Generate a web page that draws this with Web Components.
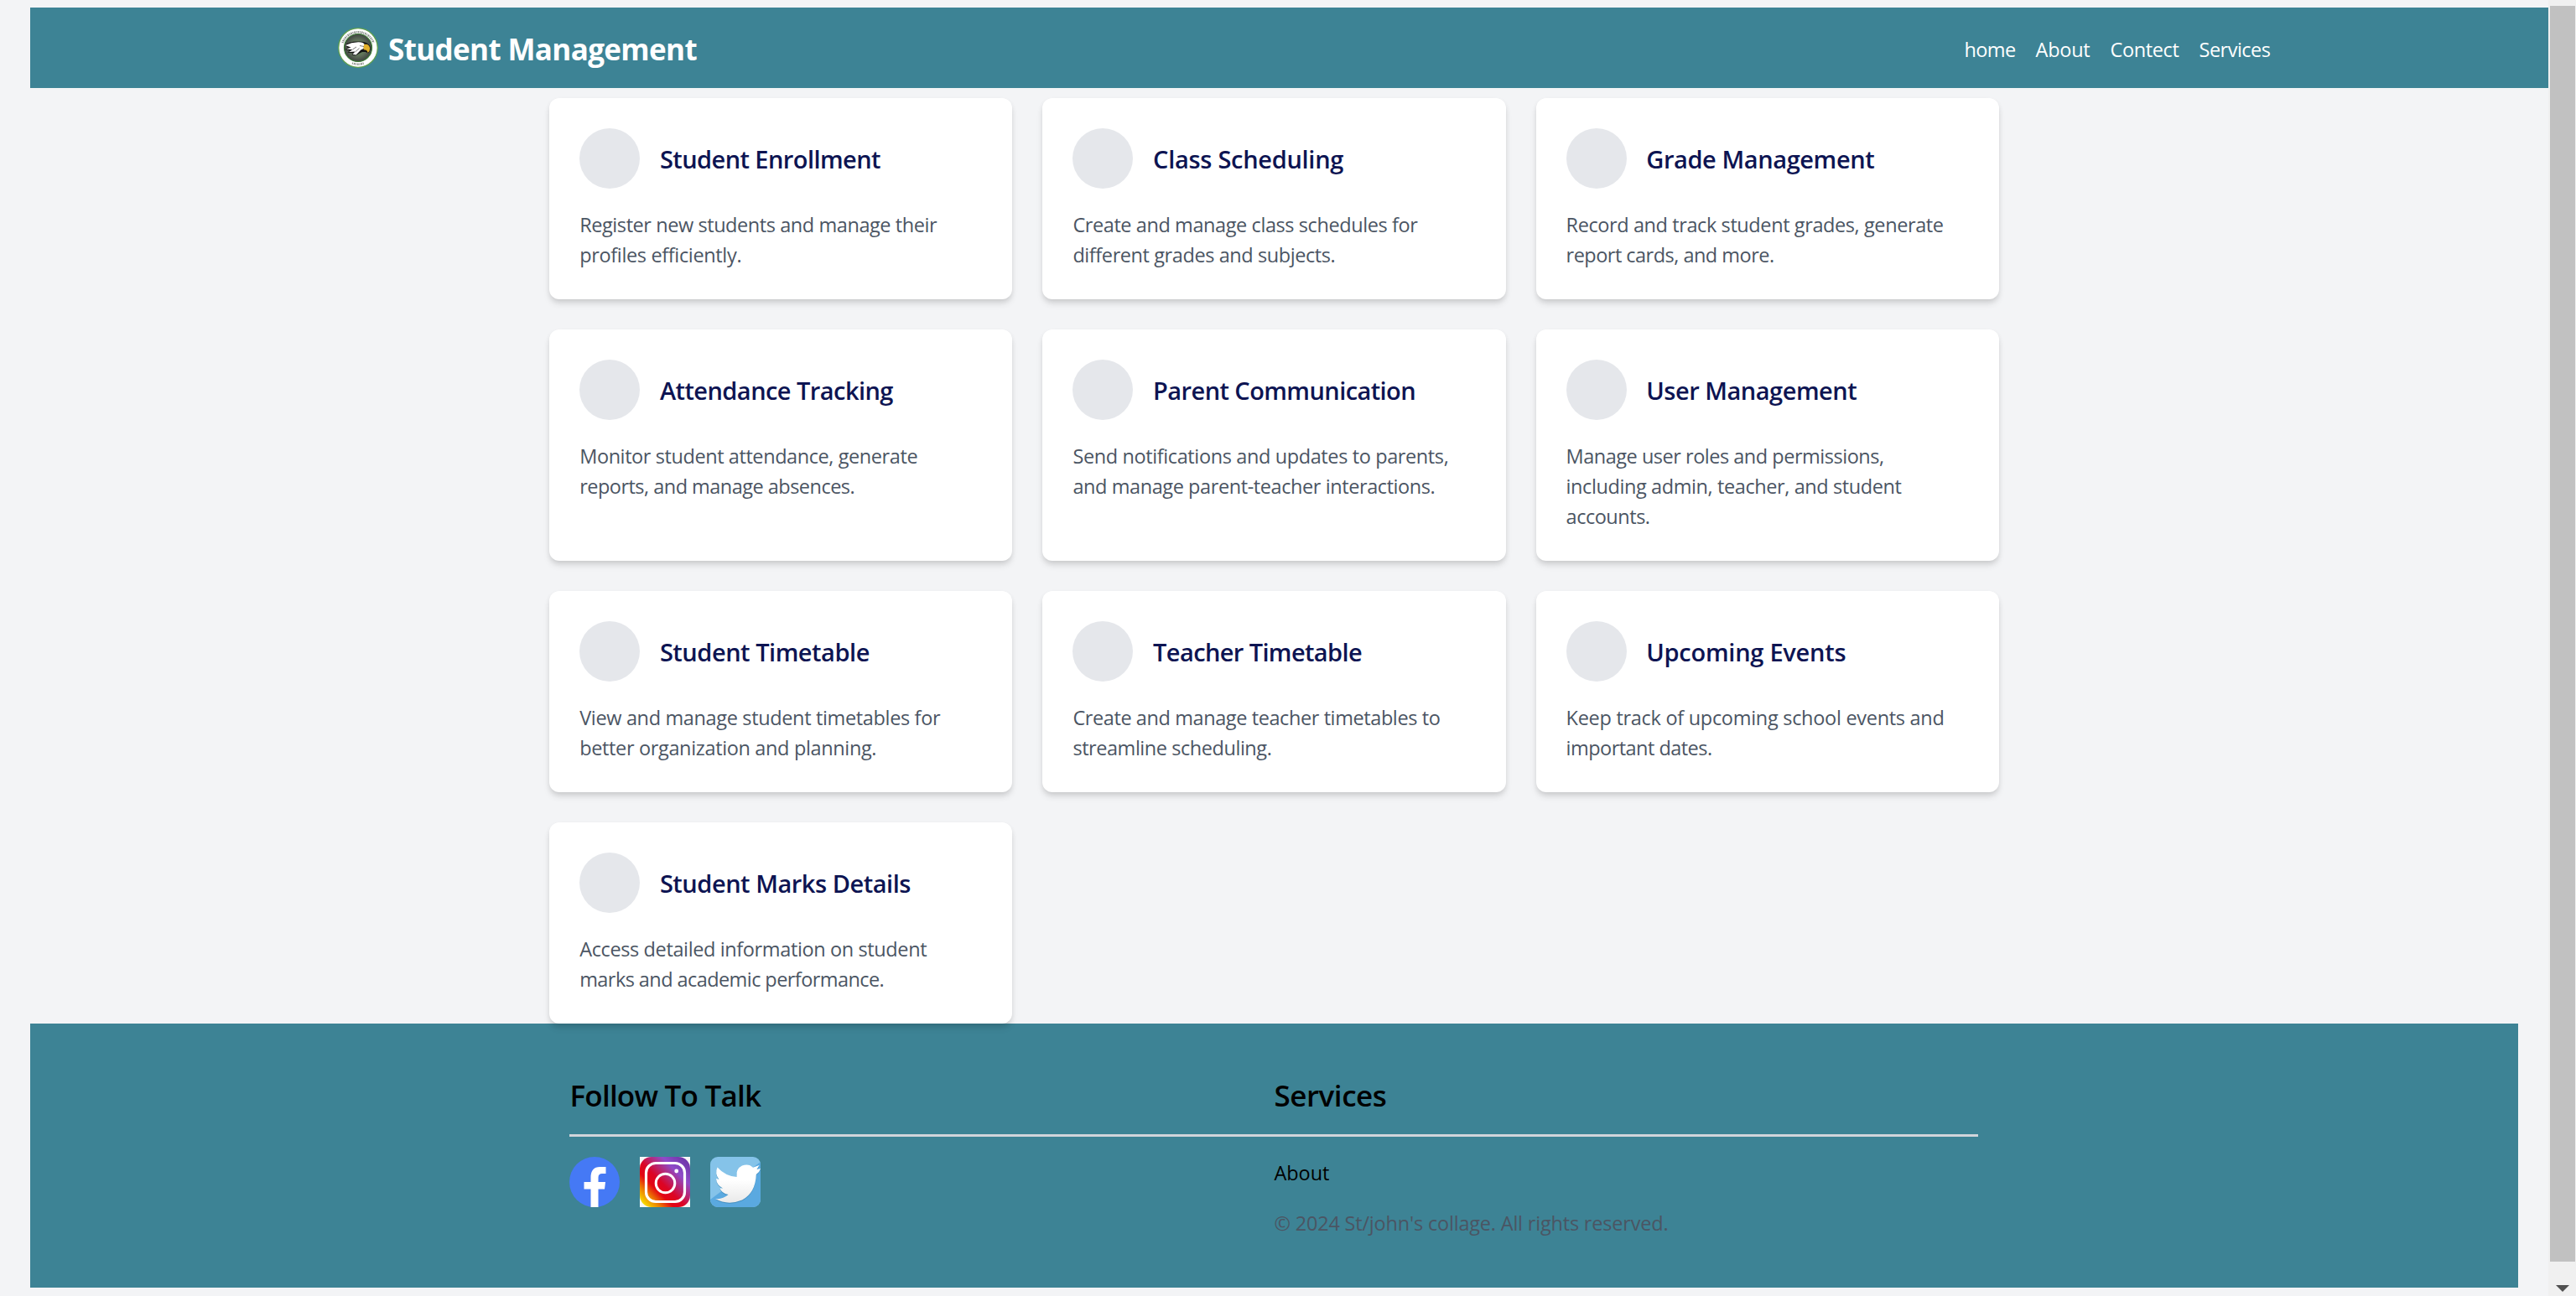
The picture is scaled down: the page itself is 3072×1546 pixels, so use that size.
<!DOCTYPE html>
<html lang="en">
<head>
<meta charset="utf-8">
<title>Student Management</title>
<style>
html,body{margin:0;height:100%;overflow:hidden}
body{background:#f3f4f6;font-family:"Open Sans","Noto Sans",sans-serif;font-size:23.5px;line-height:36px;color:#000}
</style>
</head>
<body>
<app-shell>
  <site-header slot="header">
    <fit-text w="368">Student Management</fit-text>
    <nav-link slot="nav"><fit-text w="61">home</fit-text></nav-link>
    <nav-link slot="nav"><fit-text w="65">About</fit-text></nav-link>
    <nav-link slot="nav"><fit-text w="82">Contect</fit-text></nav-link>
    <nav-link slot="nav"><fit-text w="85">Services</fit-text></nav-link>
  </site-header>
  <feature-grid>
    <feature-card><fit-text slot="title" w="263">Student Enrollment</fit-text><fit-text w="426">Register new students and manage their</fit-text><fit-text w="193">profiles efficiently.</fit-text></feature-card>
    <feature-card><fit-text slot="title" w="227">Class Scheduling</fit-text><fit-text w="411">Create and manage class schedules for</fit-text><fit-text w="313">different grades and subjects.</fit-text></feature-card>
    <feature-card><fit-text slot="title" w="272">Grade Management</fit-text><fit-text w="450">Record and track student grades, generate</fit-text><fit-text w="248">report cards, and more.</fit-text></feature-card>
    <feature-card><fit-text slot="title" w="278">Attendance Tracking</fit-text><fit-text w="403">Monitor student attendance, generate</fit-text><fit-text w="328">reports, and manage absences.</fit-text></feature-card>
    <feature-card><fit-text slot="title" w="313">Parent Communication</fit-text><fit-text w="448">Send notifications and updates to parents,</fit-text><fit-text w="432">and manage parent-teacher interactions.</fit-text></feature-card>
    <feature-card><fit-text slot="title" w="251">User Management</fit-text><fit-text w="379">Manage user roles and permissions,</fit-text><fit-text w="400">including admin, teacher, and student</fit-text><fit-text w="100">accounts.</fit-text></feature-card>
    <feature-card><fit-text slot="title" w="250">Student Timetable</fit-text><fit-text w="430">View and manage student timetables for</fit-text><fit-text w="354">better organization and planning.</fit-text></feature-card>
    <feature-card><fit-text slot="title" w="249">Teacher Timetable</fit-text><fit-text w="438">Create and manage teacher timetables to</fit-text><fit-text w="237">streamline scheduling.</fit-text></feature-card>
    <feature-card><fit-text slot="title" w="238">Upcoming Events</fit-text><fit-text w="451">Keep track of upcoming school events and</fit-text><fit-text w="174">important dates.</fit-text></feature-card>
    <feature-card><fit-text slot="title" w="299">Student Marks Details</fit-text><fit-text w="414">Access detailed information on student</fit-text><fit-text w="363">marks and academic performance.</fit-text></feature-card>
  </feature-grid>
  <site-footer>
    <fit-text slot="social-title" w="228">Follow To Talk</fit-text>
    <social-icon slot="social" kind="facebook"></social-icon>
    <social-icon slot="social" kind="instagram"></social-icon>
    <social-icon slot="social" kind="twitter"></social-icon>
    <fit-text slot="services-title" w="134">Services</fit-text>
    <fit-text slot="about" w="66">About</fit-text>
    <fit-text slot="copy" w="470">© 2024 St/john's collage. All rights reserved.</fit-text>
  </site-footer>
  <scroll-rail slot="rail"></scroll-rail>
</app-shell>
<script>
const define = (name, html, ready) => {
  const t = document.createElement('template');
  t.innerHTML = html;
  customElements.define(name, class extends HTMLElement {
    constructor() {
      super();
      this.attachShadow({ mode: 'open' }).append(t.content.cloneNode(true));
    }
    connectedCallback() { if (ready) ready(this); }
  });
};

define('app-shell', `<style>
:host{display:flex;width:3072px;height:1546px;overflow:hidden}
.page{flex:1;min-width:0;box-sizing:border-box;padding:9px 0 0 36px;display:flex;flex-direction:column}
.body{display:flex;flex-direction:column;padding-right:36px}
</style><div class="page"><slot name="header"></slot><div class="body"><slot></slot></div></div><slot name="rail"></slot>`);

define('site-header', `<style>
:host{display:block;background:#3d8395;color:#fff}
.bar{width:2304.5px;height:96px;margin:0 0 0 367px;display:flex;justify-content:space-between;align-items:center}
.brand{display:flex;align-items:center;gap:12px;font-size:35px;font-weight:700;line-height:48px}
.brand svg{width:48px;height:48px;display:block}
.name{padding-top:3px}
nav{display:flex;gap:24px}
</style><div class="bar"><div class="brand"><svg viewBox="0 0 48 48">
<defs><radialGradient id="g"><stop offset="0" stop-color="#6c9a58"/><stop offset=".6" stop-color="#5f6f5a"/><stop offset="1" stop-color="#3f4341"/></radialGradient></defs>
<circle cx="24" cy="24" r="23.3" fill="#fff" stroke="#5fa04e" stroke-width="1.3"/>
<path d="M5.500 18A19.800 19.800 0 0 1 42.500 18" fill="none" stroke="#8a8f8a" stroke-width="2.600" stroke-dasharray="1 .9 1.600 .8"/>
<path d="M17 42.300Q24 45 31 42.300" fill="none" stroke="#8a8f8a" stroke-width="2.400" stroke-dasharray="1 .9 1.600 .8"/>
<circle cx="24" cy="24" r="16.500" fill="url(#g)" stroke="#3c7a35" stroke-width="1.200"/>
<path d="M8.500 20.500Q15 16 24 16.500Q35 15.500 38.500 22.500Q39.500 27 36 30.500L33 29L29 29L25 31L21 33.500L16.500 32.500L18 30.500L11.500 29.500L14 27.500L8.500 26L12 24Z" fill="#151515"/>
<path d="M8.800 21Q16 17.500 24 17.300Q30.500 17 32 20.500L30.500 25Q27 26 25 29L21.500 32.500L17.500 31.800L20.500 28.500L13 29L17.500 26.300L10 25.500L15.500 23.500Z" fill="#fff"/>
<path d="M31 20Q37 18.500 38.200 24.500Q38.300 28 35.500 30Q35.300 26.500 32 26.500Q30 26 30.500 23.500Z" fill="#e3b02a"/>
<path d="M26 21.500L31 22.500M22 23L17.500 26M25.500 24.500L20.500 29" fill="none" stroke="#444" stroke-width=".7"/>
</svg><div class="name"><slot></slot></div></div><nav><slot name="nav"></slot></nav></div>`);

define('nav-link', `<style>:host{display:block;padding-top:3px}</style><slot></slot>`);

define('feature-grid', `<style>
:host{display:grid;grid-template-columns:repeat(3,552.2px);gap:36px;width:1728.600px;margin:12px 0 0 619.2px;position:relative;z-index:1}
</style><slot></slot>`);

define('feature-card', `<style>
:host{display:block;box-sizing:border-box;min-height:240px;padding:36px;background:#fff;border-radius:12px;box-shadow:0 6px 9px -1.5px rgba(0,0,0,.1),0 3px 6px -1.5px rgba(0,0,0,.1);color:#4b5563}
.head{display:flex;align-items:center;gap:24px;margin-bottom:24px}
.dot{width:72px;height:72px;border-radius:50%;background:#e5e7eb}
.title{font-size:29px;line-height:42px;font-weight:600;color:#0d1452;padding-top:2px;margin-left:-.3px}
.text{display:flex;flex-direction:column;padding-top:1px;margin-bottom:-1px}
</style><div class="head"><div class="dot"></div><div class="title"><slot name="title"></slot></div></div><div class="text"><slot></slot></div>`);

define('site-footer', `<style>
:host{display:block;height:315px;box-sizing:border-box;background:#3d8395;padding-top:60px}
.in{width:1680px;margin:0 0 0 643.4px}
.row{display:grid;grid-template-columns:1fr 1fr}
.heads{font-size:35px;line-height:52px;font-weight:600;height:72px;border-bottom:3px solid #d1d5db}
.icons{display:flex;gap:24px;padding-top:24px}
.links{display:flex;flex-direction:column;gap:24px;padding-top:25px}
.copy{color:#4b5563}
</style><div class="in"><div class="row heads"><slot name="social-title"></slot><slot name="services-title"></slot></div>
<div class="row"><div class="icons"><slot name="social"></slot></div><div class="links"><slot name="about"></slot><div class="copy"><slot name="copy"></slot></div></div></div></div>`);

const art = {
facebook: `<svg viewBox="0 0 60 60"><circle cx="30" cy="30" r="30" fill="#4579f5"/><path d="M25.500 60V38.500H17.500V30H25.500V24.500Q25.500 12 36.500 12H43.500V20H39Q34.500 20 34.500 24.500V30H43L42 38.500H34.500V60Z" fill="#fff"/></svg>`,
instagram: `<svg viewBox="0 0 60 60"><defs><linearGradient id="i" x1="0" y1="1" x2="1" y2="0"><stop offset=".05" stop-color="#f8e800"/><stop offset=".2" stop-color="#ed8500"/><stop offset=".34" stop-color="#e30613"/><stop offset=".46" stop-color="#dc0424"/><stop offset=".72" stop-color="#8f4bc9"/><stop offset=".9" stop-color="#7338ad"/></linearGradient></defs>
<path fill="#f7f7f7" d="M0 0h60v60H0z"/><rect width="60" height="60" rx="14" fill="url(#i)"/><rect x="7.500" y="7.500" width="46" height="46" rx="11.500" fill="none" stroke="#fff" stroke-width="3.200"/><circle cx="30.500" cy="31.500" r="11.300" fill="none" stroke="#fff" stroke-width="3"/><circle cx="43.700" cy="17" r="2.400" fill="#fff"/></svg>`,
twitter: `<svg viewBox="0 0 60 60"><defs><clipPath id="c"><rect width="60" height="60" rx="9"/></clipPath><linearGradient id="t" x1="0" y1="0" x2="0" y2="1"><stop offset=".4" stop-color="#fff"/><stop offset="1" stop-color="#e9e9e9"/></linearGradient></defs>
<g clip-path="url(#c)"><path fill="#85c3e9" d="M0 0h60v60H0z"/><path fill="#5aa9e0" d="M0 51L60 6V60H0Z"/>
<path d="M6 50Q15 51 21.500 45Q13.500 43.500 11.500 37.500H15Q7.500 33.500 7 26L10.500 27Q5 20 8.500 12.500Q18 23 31.500 24Q30.500 14 38 10.500Q46 7.500 51 12.800L58.500 10L55.500 15L60 14Q59 18 54.800 21Q54 43 38 51.500Q21 58.500 6 50Z" transform="translate(0 1)" fill="#357fac" opacity=".6"/>
<path d="M6 50Q15 51 21.500 45Q13.500 43.500 11.500 37.500H15Q7.500 33.500 7 26L10.500 27Q5 20 8.500 12.500Q18 23 31.500 24Q30.500 14 38 10.500Q46 7.500 51 12.800L58.500 10L55.500 15L60 14Q59 18 54.800 21Q54 43 38 51.500Q21 58.500 6 50Z" fill="url(#t)"/></g></svg>`
};
define('social-icon', `<style>:host{display:block;width:60px;height:60px}svg{display:block;width:60px;height:60px}</style><div></div>`,
  el => { el.shadowRoot.querySelector('div').innerHTML = art[el.getAttribute('kind')]; });

define('scroll-rail', `<style>
:host{display:flex;flex-direction:column;justify-content:space-between;align-items:center;box-sizing:border-box;width:33px;height:1546px;background:#f0f0f0;padding:7px 1px 5px 2px}
.thumb{width:30px;height:1498px;background:#c1c1c1}
svg{display:block;width:16px;height:8px}
</style><div class="thumb"></div><svg viewBox="0 0 16 8"><path d="M0 0h16L8 8z" fill="#505050"/></svg>`);

define('fit-text', `<style>:host{display:block;white-space:nowrap}span{display:inline-block}</style><span><slot></slot></span>`);
for (const el of document.querySelectorAll('fit-text')) {
  const span = el.shadowRoot.querySelector('span');
  const gap = (Number(el.getAttribute('w')) - span.getBoundingClientRect().width) / el.textContent.length;
  span.style.letterSpacing = gap.toFixed(3) + 'px';
}
</script>
</body>
</html>
